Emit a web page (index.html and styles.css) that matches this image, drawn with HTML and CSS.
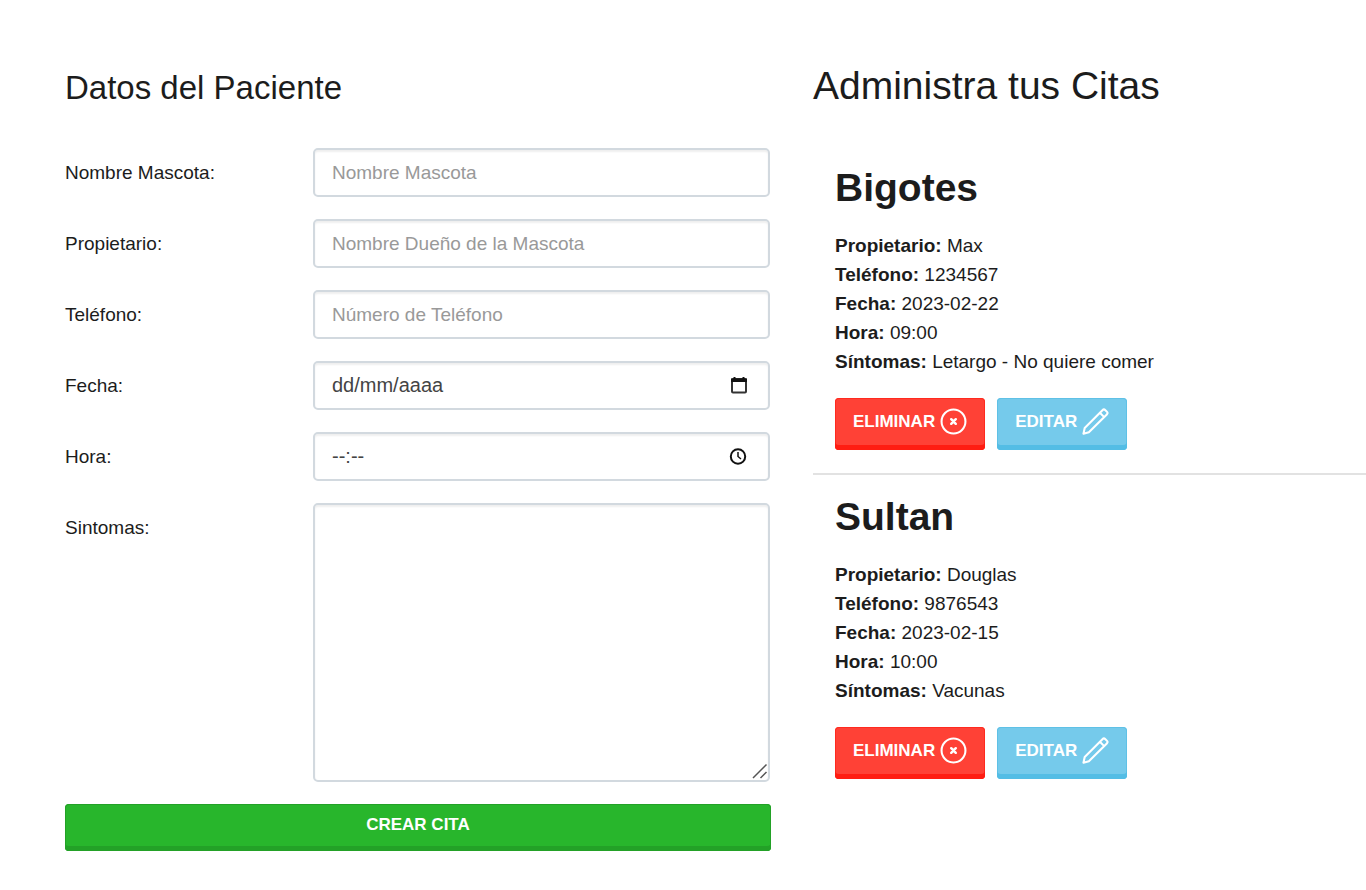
FILE: index.html
```html
<!DOCTYPE html>
<html lang="es">
<head>
<meta charset="utf-8">
<title>Administrador de Citas</title>
<link rel="stylesheet" href="styles.css">
</head>
<body>
<svg class="sprite" aria-hidden="true">
  <symbol id="icon-delete" viewBox="0 0 26 26"><circle cx="13" cy="13" r="11.500"/><path d="M10.800 10.800l4.400 4.400M15.200 10.800l-4.400 4.400" stroke-width="2.400"/></symbol>
  <symbol id="icon-edit" viewBox="0 0 26 26"><path d="M19.700 2.100a2 2 0 0 1 2.800 0l1.400 1.400a2 2 0 0 1 0 2.800L6.600 23.400 1.400 24.800l1.200-5.600zM17.200 4.600l4.200 4.200"/></symbol>
</svg>
<main class="page">
  <section class="panel">
    <h2 class="form-title">Datos del Paciente</h2>
    <form class="form">
      <div class="row">
        <label class="label" for="mascota">Nombre Mascota:</label>
        <div class="field"><input class="control" type="text" id="mascota" placeholder="Nombre Mascota"></div>
      </div>
      <div class="row">
        <label class="label" for="propietario">Propietario:</label>
        <div class="field"><input class="control" type="text" id="propietario" placeholder="Nombre Dueño de la Mascota"></div>
      </div>
      <div class="row">
        <label class="label" for="telefono">Teléfono:</label>
        <div class="field"><input class="control" type="tel" id="telefono" placeholder="Número de Teléfono"></div>
      </div>
      <div class="row">
        <label class="label" for="fecha">Fecha:</label>
        <div class="field">
          <input class="control picker" type="text" id="fecha" placeholder="dd/mm/aaaa">
          <svg class="picker-icon" viewBox="0 0 20 20" aria-hidden="true"><rect x="3" y="4" width="14" height="13.500" rx="1" fill="none" stroke="#333" stroke-width="2"/><path d="M2 3.500h16v3.500H2zM4.500 2h2v2h-2zM13.500 2h2v2h-2z" fill="#111"/></svg>
        </div>
      </div>
      <div class="row">
        <label class="label" for="hora">Hora:</label>
        <div class="field">
          <input class="control picker" type="text" id="hora" placeholder="--:--">
          <svg class="picker-icon" viewBox="0 0 20 20" aria-hidden="true"><g fill="none" stroke="#111" stroke-width="2"><circle cx="9" cy="10.500" r="7.200"/><path d="M9 6v4.500l3 2.500" stroke-width="1.500"/></g></svg>
        </div>
      </div>
      <div class="row">
        <label class="label" for="sintomas">Sintomas:</label>
        <div class="field">
          <textarea class="control area" id="sintomas"></textarea>
          <svg class="grip" viewBox="0 0 16 16" aria-hidden="true"><path d="M1 15L14.500 1.500M8.500 15l6-6" fill="none" stroke="#555" stroke-width="1.500"/></svg>
        </div>
      </div>
      <button class="btn btn-create" type="submit">CREAR CITA</button>
    </form>
  </section>
  <section class="panel">
    <h2 class="list-title">Administra tus Citas</h2>
    <article class="card">
      <h3 class="pet">Bigotes</h3>
      <p class="detail"><b>Propietario:</b> Max</p>
      <p class="detail"><b>Teléfono:</b> 1234567</p>
      <p class="detail"><b>Fecha:</b> 2023-02-22</p>
      <p class="detail"><b>Hora:</b> 09:00</p>
      <p class="detail"><b>Síntomas:</b> Letargo - No quiere comer</p>
      <div class="actions">
        <button class="btn btn-delete" type="button">ELIMINAR <svg class="icon" aria-hidden="true"><use href="#icon-delete"/></svg></button>
        <button class="btn btn-edit" type="button">EDITAR <svg class="icon" aria-hidden="true"><use href="#icon-edit"/></svg></button>
      </div>
    </article>
    <article class="card">
      <h3 class="pet">Sultan</h3>
      <p class="detail"><b>Propietario:</b> Douglas</p>
      <p class="detail"><b>Teléfono:</b> 9876543</p>
      <p class="detail"><b>Fecha:</b> 2023-02-15</p>
      <p class="detail"><b>Hora:</b> 10:00</p>
      <p class="detail"><b>Síntomas:</b> Vacunas</p>
      <div class="actions">
        <button class="btn btn-delete" type="button">ELIMINAR <svg class="icon" aria-hidden="true"><use href="#icon-delete"/></svg></button>
        <button class="btn btn-edit" type="button">EDITAR <svg class="icon" aria-hidden="true"><use href="#icon-edit"/></svg></button>
      </div>
    </article>
  </section>
</main>
</body>
</html>
```
FILE: styles.css
```css
* { box-sizing: border-box; }
body {
  margin: 0;
  background: #fff;
  color: #1c1c1c;
  font-family: "Liberation Sans", Arial, sans-serif;
  font-size: 19px;
  line-height: 29px;
}
h2, h3, p { margin: 0; }
.sprite { display: none; }
.page {
  display: grid;
  grid-template-columns: minmax(0, 706fr) minmax(0, 553fr);
  gap: 42px;
  padding: 64px 0 38px 65px;
}
.form-title, .list-title { font-weight: 400; line-height: 44px; }
.form-title { font-size: 33px; padding-top: 2px; margin-bottom: 38px; }
.list-title { font-size: 39px; margin-bottom: 54px; }
.form { display: flex; flex-direction: column; gap: 22px; }
.row { display: grid; grid-template-columns: 248px minmax(0, 1fr); align-items: start; }
.label { padding-top: 10px; }
.field { position: relative; display: flex; padding-right: 1px; }
.control {
  width: 100%;
  height: 49px;
  padding: 0 17px;
  border: 2px solid #d2d9df;
  border-radius: 5px;
  background: #fff;
  box-shadow: inset 0 2px 2px #efefef;
  color: #333;
  font: inherit;
}
.control::placeholder { color: #999; opacity: 1; }
.picker { padding-right: 50px; font-size: 20px; }
.picker::placeholder { color: #444; }
.picker-icon { position: absolute; right: 22px; top: 14px; width: 20px; height: 20px; }
.area { height: 279px; padding: 10px 17px; resize: vertical; }
.area::-webkit-resizer { background: transparent; }
.grip { position: absolute; right: 3px; bottom: 3px; width: 16px; height: 16px; pointer-events: none; }
.btn {
  border: 0;
  border-radius: 4px;
  color: #fff;
  font: inherit;
  font-size: 17px;
  font-weight: 700;
}
.btn-create { height: 47px; padding: 0 18px 6px; background: #28b62c; box-shadow: inset 0 -5px #23a127, inset 0 0 0 1px #23a127; }
.card { padding: 0 22px 23px; }
.card + .card { border-top: 2px solid #e2e2e2; padding-top: 16px; }
.pet { font-size: 39px; line-height: 52px; margin-bottom: 17px; }
.actions { display: flex; gap: 12px; padding-top: 22px; }
.actions .btn { display: flex; align-items: center; gap: 5px; height: 52px; padding: 0 18px 6px; }
.btn-delete { background: #ff4136; box-shadow: inset 0 -5px #ff1d12, inset 0 0 0 1px #ff2a1f; }
.btn-edit { background: #75caeb; box-shadow: inset 0 -5px #53bde5, inset 0 0 0 1px #5fc1e6; }
.icon { width: 27px; height: 27px; fill: none; stroke: #fff; stroke-width: 2; stroke-linecap: round; stroke-linejoin: round; }
```
